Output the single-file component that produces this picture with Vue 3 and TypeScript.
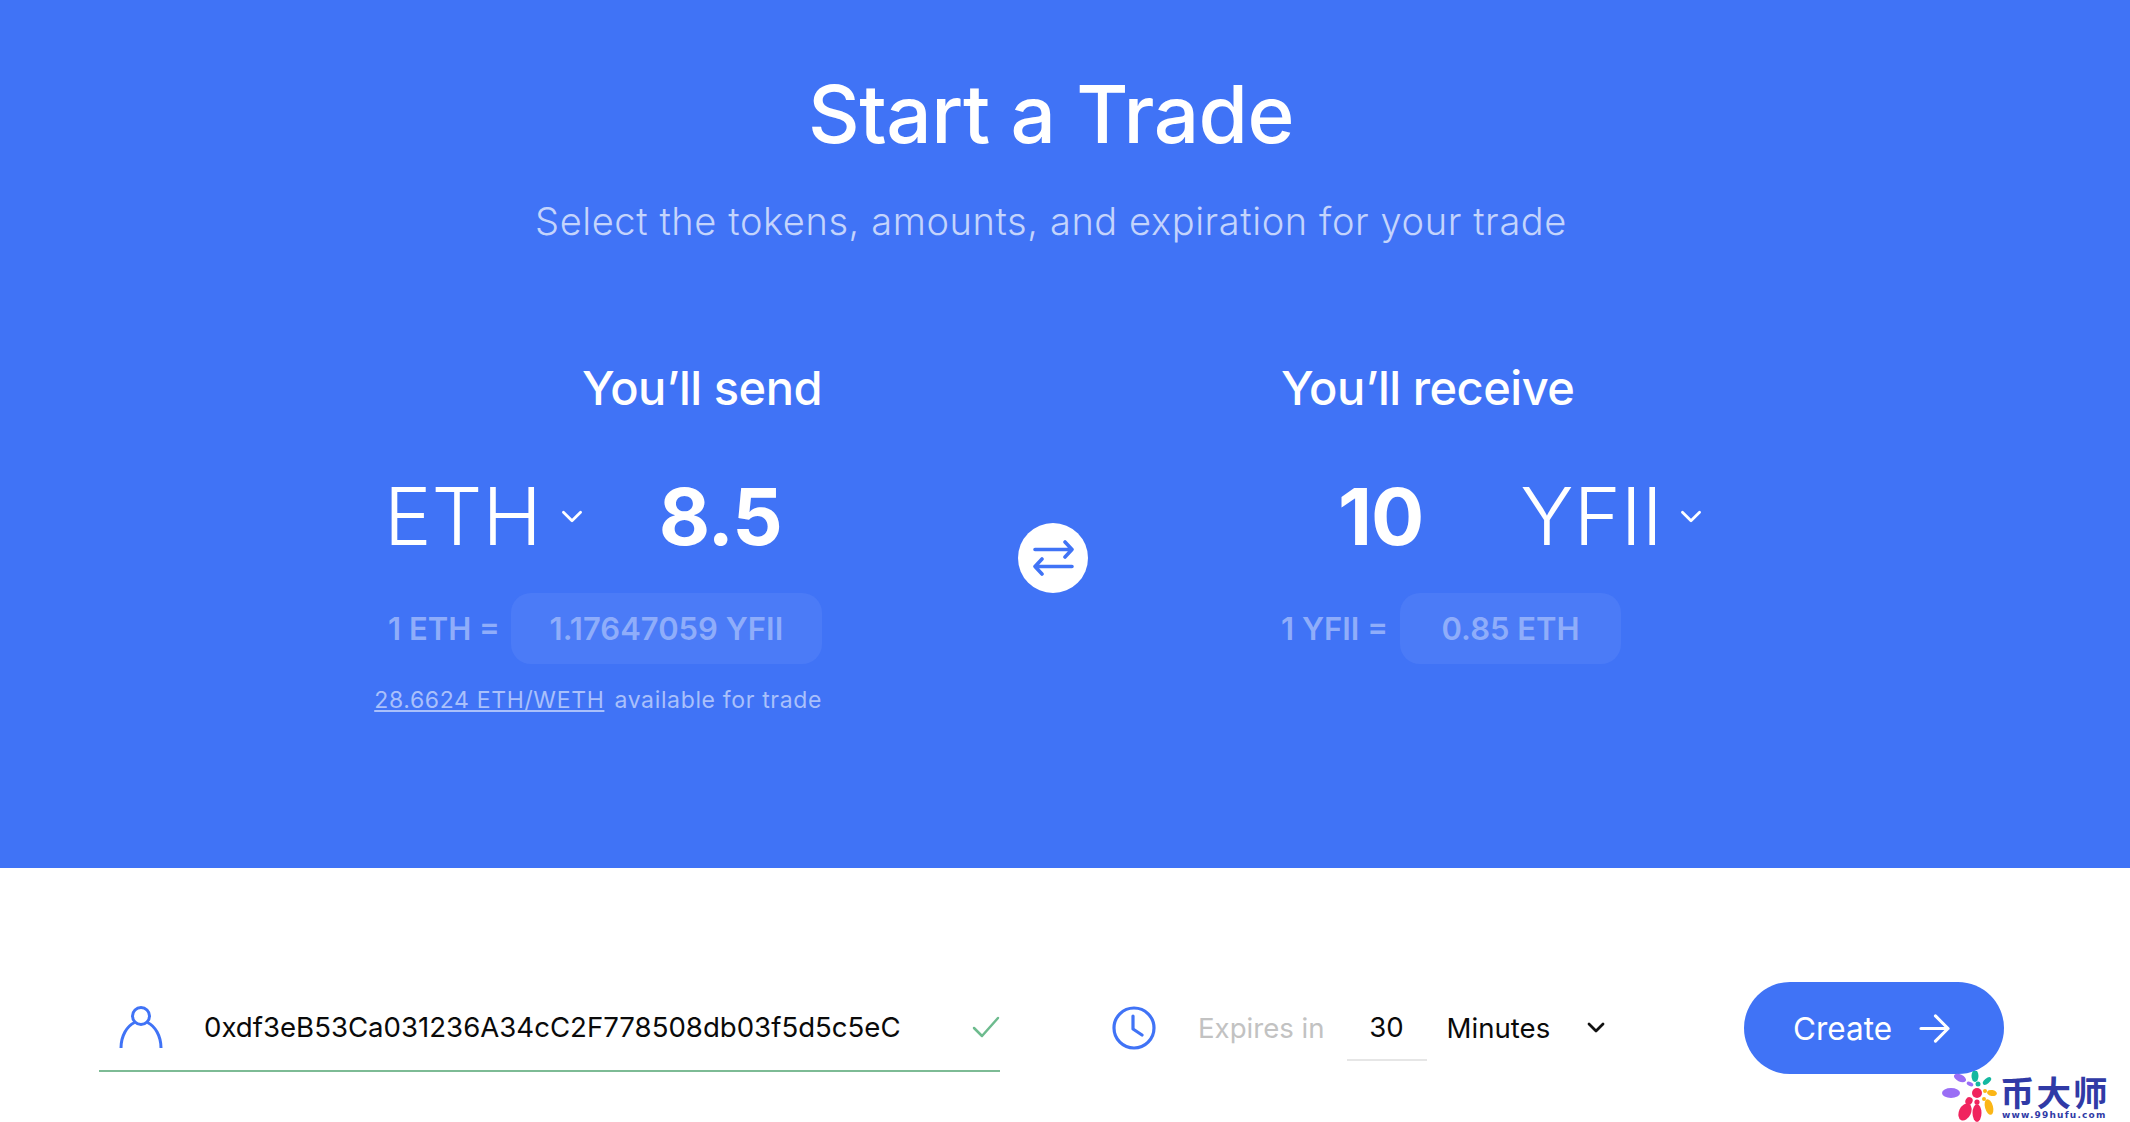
<script setup lang="ts">
const address = "0xdf3eB53Ca031236A34cC2F778508db03f5d5c5eC";
</script>

<template>
  <div class="page">
    <section class="hero">
      <h1 class="title">Start a Trade</h1>
      <p class="subtitle">Select the tokens, amounts, and expiration for your trade</p>
      <div class="trade">
        <div class="col send">
          <h2 class="col-title">You’ll send</h2>
          <div class="pair">
            <span class="token">ETH</span>
            <svg class="chev" viewBox="0 0 20 14" fill="none"><path d="M2 3l8 8 8-8" stroke="#fff" stroke-width="2.6" stroke-linecap="round" stroke-linejoin="round"/></svg>
            <span class="amount amount-send">8.5</span>
          </div>
          <div class="rate">
            <span class="rate-label">1 ETH =</span>
            <span class="rate-pill pill-send">1.17647059 YFII</span>
          </div>
          <div class="avail"><span class="avail-link">28.6624 ETH/WETH</span><span class="avail-rest">available for trade</span></div>
        </div>
        <button class="swap" type="button" aria-label="Swap">
          <svg viewBox="0 0 41 36" width="41" height="36" fill="none" stroke="#4073f6" stroke-width="3.6" stroke-linecap="round" stroke-linejoin="round">
            <path d="M2 9.5h37M32 2l7 7.5-7 7.5"/>
            <path d="M39 26.5H2M9 19l-7 7.5L9 34"/>
          </svg>
        </button>
        <div class="col receive">
          <h2 class="col-title">You’ll receive</h2>
          <div class="pair pair-receive">
            <span class="amount amount-receive">10</span>
            <span class="token">YFII</span>
            <svg class="chev" viewBox="0 0 20 14" fill="none"><path d="M2 3l8 8 8-8" stroke="#fff" stroke-width="2.6" stroke-linecap="round" stroke-linejoin="round"/></svg>
          </div>
          <div class="rate">
            <span class="rate-label">1 YFII =</span>
            <span class="rate-pill pill-receive">0.85 ETH</span>
          </div>
        </div>
      </div>
    </section>

    <section class="bar">
      <div class="address">
        <svg class="user" viewBox="0 0 44 42" fill="none" stroke="#4073f6" stroke-width="3">
          <circle cx="22" cy="10" r="8.5"/>
          <path d="M2 42C2 30 8 20 15.5 16.5M28.5 16.5C36 20 42 30 42 42"/>
        </svg>
        <span class="addr-text">{{ address }}</span>
        <svg class="check" viewBox="0 0 28 22" fill="none" stroke="#6dbb8e" stroke-width="2.5" stroke-linecap="round" stroke-linejoin="round"><path d="M2 12l8 8L26 2"/></svg>
      </div>
      <div class="expiry">
        <svg class="clock" viewBox="0 0 44 44" fill="none" stroke="#4073f6" stroke-width="3.2" stroke-linecap="round" stroke-linejoin="round">
          <circle cx="22" cy="22" r="20"/>
          <path d="M21 10v13l9 6"/>
        </svg>
        <span class="expires">Expires in</span>
        <span class="num">30</span>
        <span class="unit">Minutes</span>
        <svg class="unit-chev" viewBox="0 0 18 12" fill="none" stroke="#111" stroke-width="2.8" stroke-linecap="round" stroke-linejoin="round"><path d="M2 2l7 7 7-7"/></svg>
      </div>
      <button class="create" type="button">
        <span>Create</span>
        <svg viewBox="0 0 32 30" width="31" height="29" fill="none" stroke="#fff" stroke-width="3.2" stroke-linecap="round" stroke-linejoin="round"><path d="M2 15h28M17 2l13 13-13 13"/></svg>
      </button>
    </section>

    <div class="mark">
      <svg class="flower" viewBox="0 0 56 52">
        <ellipse cx="9" cy="22" rx="9" ry="5" fill="#9a6ef5"/>
        <ellipse cx="18" cy="7" rx="6.5" ry="3.5" fill="#9a6ef5" transform="rotate(25 18 7)"/>
        <ellipse cx="28" cy="13" rx="3.5" ry="2" fill="#9a6ef5" transform="rotate(25 28 13)"/>
        <ellipse cx="33" cy="5" rx="3.5" ry="6" fill="#14b8a0"/>
        <circle cx="36" cy="13" r="2.5" fill="#14b8a0"/>
        <ellipse cx="45" cy="10" rx="5" ry="2.5" fill="#14b8a0" transform="rotate(-40 45 10)"/>
        <circle cx="35" cy="22" r="5" fill="#f0245e"/>
        <ellipse cx="50" cy="22" rx="5" ry="3" fill="#fbb616" transform="rotate(10 50 22)"/>
        <circle cx="43" cy="20" r="2" fill="#fbb616"/>
        <circle cx="42" cy="28" r="2" fill="#fbb616"/>
        <ellipse cx="47" cy="36" rx="4" ry="8" fill="#fbb616" transform="rotate(-15 47 36)"/>
        <ellipse cx="23" cy="41" rx="6" ry="9" fill="#f0245e" transform="rotate(25 23 41)"/>
        <ellipse cx="27" cy="30" rx="3.5" ry="4" fill="#f0245e" transform="rotate(30 27 30)"/>
        <ellipse cx="35" cy="42" rx="4.5" ry="9" fill="#f0245e"/>
        <circle cx="35" cy="31" r="2.6" fill="#f0245e"/>
      </svg>
      <div class="mark-text">
        <div class="mark-cn">币大师</div>
        <div class="mark-url">www.99hufu.com</div>
      </div>
    </div>
  </div>
</template>

<style scoped>
.page {
  position: relative;
  width: 2130px;
  height: 1122px;
  overflow: hidden;
  background: #fff;
  font-family: "Inter", "Noto Sans", sans-serif;
}
.hero {
  box-sizing: border-box;
  height: 868px;
  background: #4073f6;
  color: #fff;
  padding: 66px 28px 0 0;
  display: flex;
  flex-direction: column;
  align-items: center;
}
.title {
  margin: 0;
  font-size: 80px;
  line-height: 96px;
  font-weight: 500;
  letter-spacing: -0.5px;
}
.subtitle {
  margin: 35px 0 0;
  font-size: 38px;
  line-height: 48px;
  font-weight: 300;
  letter-spacing: 0.6px;
  color: #c4d4fc;
}
.trade {
  align-self: stretch;
  margin-top: 115px;
  display: flex;
  align-items: flex-start;
  padding-left: 376px;
}
.col {
  display: flex;
  flex-direction: column;
}
.send {
  width: 446px;
  align-items: flex-end;
}
.receive {
  margin-left: 193px;
}
.col-title {
  margin: 0;
  font-size: 47px;
  line-height: 56px;
  font-weight: 500;
  letter-spacing: -0.5px;
}
.pair {
  display: flex;
  align-items: center;
  margin-top: 50px;
  height: 100px;
  align-self: stretch;
  padding-left: 8px;
}
.pair-receive {
  padding-left: 57px;
}
.token {
  font-size: 80px;
  line-height: 100px;
  font-weight: 300;
}
.chev {
  width: 22px;
  height: 15px;
  margin-left: 17px;
}
.send .chev {
  margin-left: 19px;
}
.amount {
  font-size: 79px;
  line-height: 100px;
  font-weight: 700;
  letter-spacing: -1px;
}
.amount-send {
  margin-left: 76px;
}
.amount-receive {
  margin-right: 97px;
}
.rate {
  display: flex;
  align-items: center;
  margin-top: 27px;
  align-self: stretch;
  justify-content: flex-start;
  padding-left: 12px;
}
.receive .rate {
  padding-left: 0;
}
.rate-label {
  font-size: 31px;
  font-weight: 600;
  color: #8fadfa;
  white-space: nowrap;
}
.rate-pill {
  box-sizing: border-box;
  height: 71px;
  margin-left: 11px;
  display: flex;
  align-items: center;
  justify-content: center;
  border-radius: 20px;
  background: #4b7bf7;
  font-size: 31px;
  font-weight: 600;
  color: #8fadfa;
  white-space: nowrap;
}
.pill-send {
  width: 311px;
}
.pill-receive {
  width: 221px;
  margin-left: 12px;
}
.avail {
  margin-top: 21px;
  font-size: 23px;
  line-height: 30px;
  letter-spacing: 0.65px;
  color: #a9c0fb;
  white-space: nowrap;
}
.avail-link {
  text-decoration: underline;
}
.avail-rest {
  margin-left: 10px;
}
.swap {
  box-sizing: border-box;
  width: 70px;
  height: 70px;
  margin: 163px 0 0 196px;
  padding: 0;
  border: 0;
  border-radius: 50%;
  background: #fff;
  flex: none;
  display: flex;
  align-items: center;
  justify-content: center;
}
.bar {
  display: flex;
  align-items: flex-start;
  height: 254px;
  box-sizing: border-box;
  padding: 114px 0 0 99px;
}
.address {
  box-sizing: border-box;
  width: 901px;
  height: 90px;
  display: flex;
  align-items: center;
  border-bottom: 2px solid #7dbb95;
  padding: 2px 0 0 20px;
  flex: none;
}
.user {
  width: 44px;
  height: 42px;
  flex: none;
}
.addr-text {
  margin-left: 41px;
  font-size: 27.6px;
  color: #0a0a0a;
  white-space: nowrap;
}
.check {
  width: 28px;
  height: 22px;
  margin-left: auto;
  flex: none;
}
.expiry {
  display: flex;
  align-items: center;
  height: 92px;
  margin-left: 112px;
  flex: none;
}
.clock {
  width: 44px;
  height: 44px;
  flex: none;
}
.expires {
  margin-left: 42px;
  font-size: 27.6px;
  color: #c2c2c2;
}
.num {
  box-sizing: border-box;
  width: 80px;
  height: 66px;
  margin-left: 22px;
  display: flex;
  align-items: center;
  justify-content: center;
  border-bottom: 2px solid #e6e6e6;
  font-size: 27.6px;
  color: #0a0a0a;
}
.unit {
  margin-left: 20px;
  font-size: 27.6px;
  color: #0a0a0a;
}
.unit-chev {
  width: 18px;
  height: 12px;
  margin-left: 37px;
}
.create {
  box-sizing: border-box;
  width: 260px;
  height: 92px;
  margin-left: auto;
  margin-right: 126px;
  padding: 0 5px 0 0;
  border: 0;
  border-radius: 46px;
  background: #4073f6;
  color: #fff;
  font-family: inherit;
  font-size: 31.5px;
  font-weight: 400;
  display: flex;
  align-items: center;
  justify-content: center;
  gap: 27px;
  flex: none;
}
.mark {
  position: absolute;
  left: 1942px;
  top: 1071px;
  display: flex;
  align-items: flex-start;
}
.flower {
  width: 56px;
  height: 52px;
  flex: none;
}
.mark-text {
  margin-left: 2px;
  padding-top: 2px;
}
.mark-cn {
  font-family: "Noto Sans CJK SC", sans-serif;
  font-size: 34.5px;
  line-height: 36px;
  font-weight: 700;
  color: #303aa6;
  letter-spacing: 2px;
}
.mark-url {
  margin-top: 1px;
  padding-left: 2px;
  font-family: "DejaVu Sans", sans-serif;
  font-size: 9px;
  line-height: 11px;
  font-weight: 700;
  color: #303aa6;
  letter-spacing: 1.2px;
}
</style>
